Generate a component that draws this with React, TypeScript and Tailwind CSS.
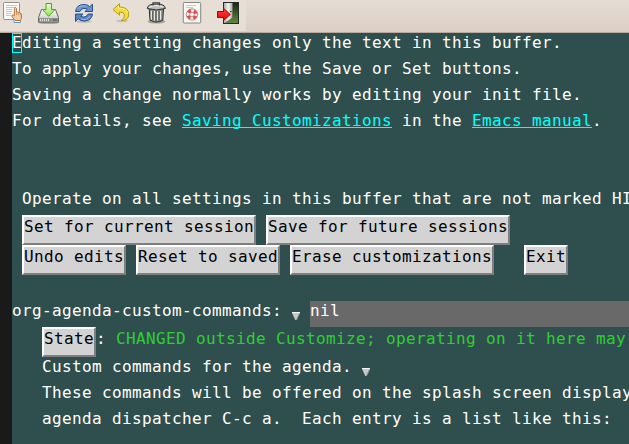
import type { ReactNode } from "react";

const Line = ({ children }: { children?: ReactNode }) => (
  <div className="flex h-[26px] shrink-0 items-start">{children}</div>
);

const Button = ({ children }: { children: ReactNode }) => (
  <button className="block h-[30px] shrink-0 border-2 border-t-white border-l-white border-r-[#7f7f7f] border-b-[#7f7f7f] bg-[#d3d3d3] text-black">
    <span className="block h-[26px] leading-[19px]">{children}</span>
  </button>
);

const Link = ({ children }: { children: ReactNode }) => (
  <a className="h-[17px] border-b border-[#00ffff] text-[#00ffff]">{children}</a>
);

const Triangle = () => (
  <svg className="mt-[11px] h-[8px] w-[8px] shrink-0" viewBox="0 0 8 8">
    <path d="M0 0H8V1L4.7 8H3.3L0 1Z" fill="#c9c9c9" />
    <path d="M0 .5H8" stroke="#f4f4f4" />
    <path d="M7.5 1.5L4.5 7.8" stroke="#8d8d8d" />
  </svg>
);

const EditIcon = () => (
  <svg className="h-6 w-6" viewBox="0 0 24 24">
    <rect x="3.5" y="1.5" width="16" height="17" rx=".8" fill="#fafaf8" stroke="#92928d" />
    <path d="M6 4.5H17M6 6.5H16M6 8.5H12M6 10.5H12M6 12.5H11M6 14.5H11" stroke="#b9b9b5" strokeWidth=".8" />
    <path d="M14 19V21.5H20.5V19" fill="#f5f8fc" stroke="#6b9bd1" />
    <path d="M15 19.5L11.8 15.2Q11.8 13 14.4 14.4V7.3Q15.4 5.6 16.5 7.3V11.2Q17.5 10.3 18.3 11.6Q19.3 10.8 20 12.2Q21.5 12 21.5 14V17L20.3 19.5Z" fill="#f6cda3" stroke="#b56d2c" strokeWidth=".9" />
    <path d="M16.5 11V14M18.3 11.8V14M20 12.5V14.5" stroke="#c88449" strokeWidth=".7" />
  </svg>
);

const SaveIcon = () => (
  <svg className="h-6 w-6" viewBox="0 0 24 24">
    <defs>
      <linearGradient id="drive" x2="0" y2="1"><stop stopColor="#fafafa" /><stop offset="1" stopColor="#bfc1bd" /></linearGradient>
      <linearGradient id="download" x2="0" y2="1"><stop stopColor="#e9fadb" /><stop offset="1" stopColor="#91e549" /></linearGradient>
    </defs>
    <ellipse cx="12.5" cy="21.8" rx="10.5" ry="1.3" fill="#ada59e" />
    <path d="M5.5 8.5H19.5L22.5 16.5V21.2H2.5V16.5Z" fill="url(#drive)" stroke="#666864" />
    <path d="M3 17H22V20.7H3Z" fill="#8e918c" />
    <path d="M4.5 18V20M6.5 18V20M8.5 18V20M10.5 18V20M12.5 18V20" stroke="#eeeeec" strokeWidth=".9" />
    <path d="M17 19H21" stroke="#51544f" />
    <path d="M10 2.5H15.5V8.5H19L12.7 15.3L6.4 8.5H10Z" fill="url(#download)" stroke="#4ea518" />
  </svg>
);

const RefreshIcon = () => (
  <svg className="h-6 w-6" viewBox="0 0 24 24">
    <ellipse cx="12" cy="20.5" rx="8" ry="1.5" fill="#c4bcb4" />
    <path d="M3.5 10.5Q4.5 3.5 12 3.5Q15.5 3.5 17.8 5.7L20.5 3.2V10.5H13L15.3 8.2Q10.5 5.8 7.8 10.5Z" fill="#6b94ce" stroke="#284f8c" />
    <path d="M20.5 13Q19.5 20 12 20Q8.5 20 6.2 17.8L3.5 20.3V13H11L8.7 15.3Q13.5 17.7 16.2 13Z" fill="#5a86c3" stroke="#284f8c" />
    <path d="M5.5 8Q8.5 3.5 14.5 5.2M18 15Q15 20 9 18" fill="none" stroke="#a9c4e8" strokeWidth=".8" />
  </svg>
);

const UndoIcon = () => (
  <svg className="h-6 w-6" viewBox="0 0 24 24">
    <ellipse cx="14" cy="20" rx="6" ry="1.3" fill="#c9c1b7" />
    <path d="M11.5 2.7V6Q20.7 6 20.7 13.5Q20.7 19.5 13 19.7Q17 17.2 16.4 13.7Q15.8 11 11.5 11V14.2L5 8.5Z" fill="#f3dc35" stroke="#bd9d0c" />
    <path d="M10.5 5V7.2Q18.8 7 19.3 12" fill="none" stroke="#fff497" strokeWidth=".8" />
  </svg>
);

const TrashIcon = () => (
  <svg className="h-6 w-6" viewBox="0 0 24 24">
    <ellipse cx="12.5" cy="20.5" rx="9" ry="2" fill="#a8a19a" />
    <path d="M5.2 8H19.5L18.8 19.2Q12.5 22.8 6 19.2Z" fill="#8f928c" stroke="#30322f" />
    <path d="M7.4 10V18.5M10.4 10V19.5M13.5 10V19.5M16.5 10V18.5" stroke="#e8e8e5" strokeWidth="1.2" />
    <path d="M8.8 10V19M12 10V20M15 10V19.5" stroke="#474a45" strokeWidth=".9" />
    <path d="M3.3 7.5Q3.3 3 12.3 3Q21.3 3 21.3 7.5Q12.3 10.5 3.3 7.5Z" fill="#babcb7" stroke="#2e302d" />
    <path d="M5 6.5Q12 3 19 6.2" fill="none" stroke="#f0f0ed" />
    <path d="M9 4.5V1.8H15.5V4.5" fill="none" stroke="#3a3c38" strokeWidth="1.2" />
  </svg>
);

const HelpIcon = () => (
  <svg className="h-6 w-6" viewBox="0 0 24 24">
    <rect x="3.3" y="1.5" width="17.4" height="20.5" rx=".8" fill="#f7f7f5" stroke="#858782" />
    <path d="M6 4.5H16M6 6.5H13" stroke="#cacac7" />
    <circle cx="12" cy="13.5" r="4" fill="none" stroke="#efefed" strokeWidth="3.5" />
    <circle cx="12" cy="13.5" r="4" fill="none" stroke="#e34b4b" strokeWidth="3.2" strokeDasharray="3.14 3.14" strokeDashoffset="-1.57" />
    <circle cx="12" cy="13.5" r="5.7" fill="none" stroke="#b65b5b" strokeWidth=".7" />
    <circle cx="12" cy="13.5" r="2.2" fill="none" stroke="#b65b5b" strokeWidth=".6" />
  </svg>
);

const ExitIcon = () => (
  <svg className="h-6 w-6" viewBox="0 0 24 24">
    <defs>
      <linearGradient id="outside" x2="0" y2="1"><stop stopColor="#13270b" /><stop offset="1" stopColor="#618c3e" /></linearGradient>
      <linearGradient id="door"><stop stopColor="#a8aaa5" /><stop offset=".5" stopColor="#f5f5f3" /><stop offset="1" stopColor="#a5a7a3" /></linearGradient>
      <linearGradient id="arrow" x2="0" y2="1"><stop stopColor="#ff4545" /><stop offset="1" stopColor="#ec0000" /></linearGradient>
    </defs>
    <rect x="7.5" y="1.5" width="15" height="21" fill="url(#outside)" stroke="#252b2c" />
    <path d="M8 2H16.5V17L9 22H8Z" fill="url(#door)" />
    <path d="M16.5 2V17L9 22" fill="none" stroke="#686b68" strokeWidth=".7" />
    <path d="M1.5 10.5H7.5V7.3L14.3 13.5L7.5 19.5V16.5H1.5Z" fill="url(#arrow)" stroke="#9e0505" />
    <path d="M14 10.5H15.5" stroke="#222" />
  </svg>
);

export default function App() {
  return (
    <main className="flex h-[444px] w-[629px] flex-col overflow-hidden bg-[#2f4f4f]">
      <header className="flex h-[33px] shrink-0 border-b border-[#b9aa9d] bg-linear-to-b from-[#e5dcd3] to-[#dccfc5]">
        <div className="flex h-[31px] w-[246px] items-start gap-3 bg-[#e7ded6] pt-px">
          <EditIcon />
          <SaveIcon />
          <RefreshIcon />
          <UndoIcon />
          <TrashIcon />
          <HelpIcon />
          <ExitIcon />
        </div>
      </header>
      <div className="flex min-h-0 flex-1">
        <div className="w-3 shrink-0 bg-[#1a1a1a]" />
        <section className="flex w-[617px] flex-col overflow-hidden whitespace-pre font-['DejaVu_Sans_Mono',monospace] text-[16px] leading-[19px] tracking-[0.367px] text-white">
          <Line>
            <span className="h-5 w-[10px] outline outline-1 -outline-offset-1 outline-[#00ffff]">E</span>
            diting a setting changes only the text in this buffer.
          </Line>
          <Line>To apply your changes, use the Save or Set buttons.</Line>
          <Line>Saving a change normally works by editing your init file.</Line>
          <Line>
            <span>For details, see </span>
            <Link>Saving Customizations</Link>
            <span> in the </span>
            <Link>Emacs manual</Link>.
          </Line>
          <Line />
          <Line />
          <Line><span> Operate on all settings in this buffer that are not marked HI</span></Line>
          <div className="flex shrink-0 gap-[10px] pl-[10px]">
            <Button>Set for current session</Button>
            <Button>Save for future sessions</Button>
          </div>
          <div className="flex shrink-0 gap-[10px] pl-[10px]">
            <Button>Undo edits</Button>
            <Button>Reset to saved</Button>
            <Button>Erase customizations</Button>
            <div className="ml-5"><Button>Exit</Button></div>
          </div>
          <Line />
          <Line>
            <span>org-agenda-custom-commands: </span>
            <Triangle />
            <div className="ml-[10px] h-[26px] flex-1 bg-[#696969]">nil</div>
          </Line>
          <div className="flex h-[30px] shrink-0 pl-[30px]">
            <Button>State</Button>
            <span className="pt-[2px]">: </span>
            <span className="pt-[2px] text-[#32cd32]">CHANGED outside Customize; operating on it here may</span>
          </div>
          <div className="flex flex-col pl-[30px]">
            <Line><span>Custom commands for the agenda. </span><Triangle /></Line>
            <Line>These commands will be offered on the splash screen display</Line>
            <Line>agenda dispatcher C-c a.  Each entry is a list like this:</Line>
          </div>
        </section>
      </div>
    </main>
  );
}
